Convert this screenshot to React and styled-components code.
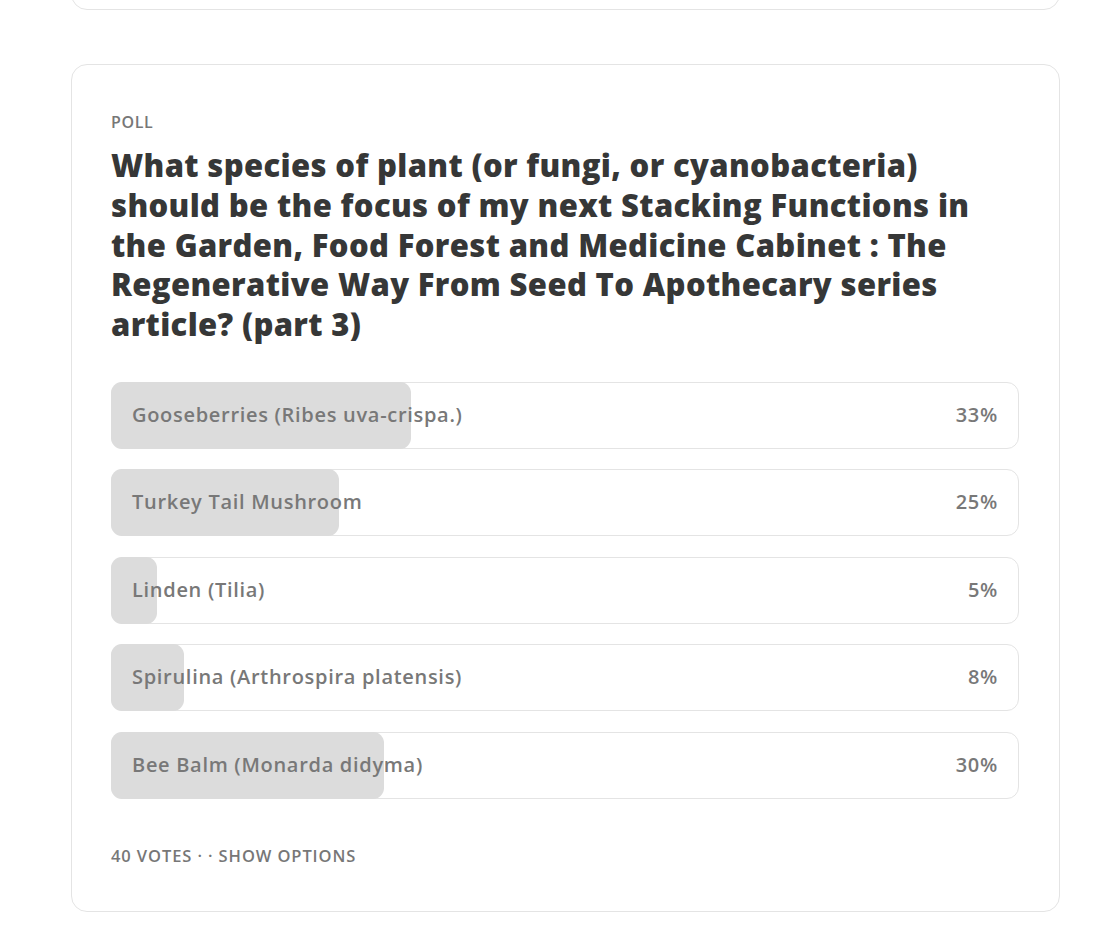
import React from "react";
import styled, { createGlobalStyle } from "styled-components";

const GlobalStyle = createGlobalStyle`
  html, body {
    margin: 0;
    padding: 0;
    background: #ffffff;
    font-family: "Open Sans", "Noto Sans", sans-serif;
  }
`;

const Page = styled.div`
  display: flex;
  flex-direction: column;
  gap: 54px;
  padding: 0 53px 0 71px;
  margin-top: -41px;
`;

const PrevCard = styled.div`
  height: 49px;
  border: solid 1px #e4e4e4;
  border-radius: 16px;
`;

const Card = styled.div`
  display: flex;
  flex-direction: column;
  border: solid 1px #e4e4e4;
  border-radius: 16px;
  padding: 47px 40px 45px 39px;
`;

const Label = styled.span`
  font-size: 16px;
  line-height: 20px;
  font-weight: 600;
  letter-spacing: 0.6px;
  color: #777777;
  text-transform: uppercase;
`;

const Title = styled.h2`
  margin: 14px 0 37px;
  font-size: 31px;
  line-height: 39.75px;
  font-weight: 800;
  letter-spacing: 0.35px;
  color: #363737;
`;

const Options = styled.div`
  display: flex;
  flex-direction: column;
  gap: 20.5px;
`;

const Row = styled.div`
  position: relative;
  display: flex;
  align-items: center;
  justify-content: space-between;
  height: 67px;
  padding: 0 20px 2px 20px;
  border: solid 1px #e4e4e4;
  border-radius: 12px;
  font-size: 20px;
  font-weight: 600;
  letter-spacing: 0.7px;
  color: #787878;
  box-sizing: border-box;
`;

const Fill = styled.div`
  position: absolute;
  left: -1px;
  top: -1px;
  bottom: -1px;
  background: #dcdcdc;
  border-radius: 11px;
`;

const OptionText = styled.span`
  position: relative;
`;

const Footer = styled.div`
  margin-top: 47px;
  font-size: 16.5px;
  line-height: 20px;
  font-weight: 600;
  letter-spacing: 0.9px;
  color: #777777;
`;

const options = [
  { label: "Gooseberries (Ribes uva-crispa.)", pct: 33 },
  { label: "Turkey Tail Mushroom", pct: 25 },
  { label: "Linden (Tilia)", pct: 5 },
  { label: "Spirulina (Arthrospira platensis)", pct: 8 },
  { label: "Bee Balm (Monarda didyma)", pct: 30 },
];

const App = () => (
  <>
    <GlobalStyle />
    <Page>
      <PrevCard />
      <Card>
        <Label>Poll</Label>
        <Title>
          What species of plant (or fungi, or cyanobacteria) should be the focus of my next
          Stacking Functions in the Garden, Food Forest and Medicine Cabinet : The Regenerative
          Way From Seed To Apothecary series article? (part 3)
        </Title>
        <Options>
          {options.map(o => (
            <Row key={o.label}>
              <Fill style={{ width: `calc(${o.pct}% + 1px)` }} />
              <OptionText>{o.label}</OptionText>
              <OptionText>{o.pct}%</OptionText>
            </Row>
          ))}
        </Options>
        <Footer>40 VOTES · · SHOW OPTIONS</Footer>
      </Card>
    </Page>
  </>
);

export default App;
